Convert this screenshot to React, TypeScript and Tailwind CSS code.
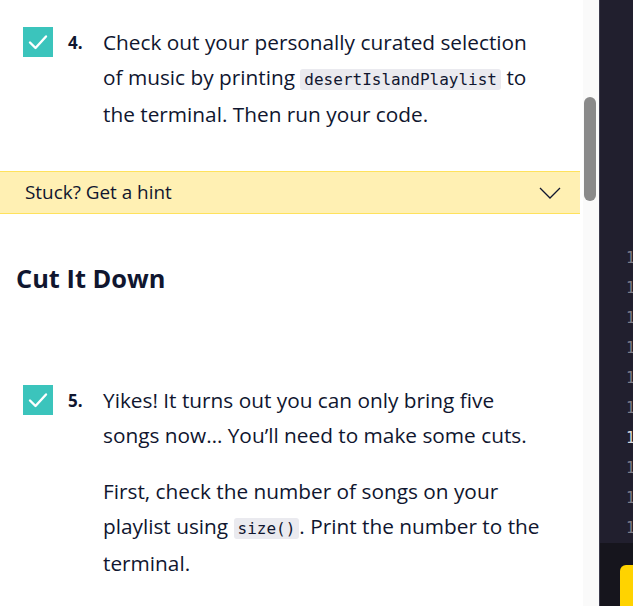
import React from "react";

const Check = () => (
  <div className="w-[30px] h-[30px] bg-[#3bc4bc] flex items-center justify-center shrink-0">
    <svg width="20" height="16" viewBox="0 0 20 16" fill="none">
      <path d="M2 8.5l5.5 5.5L18 2.5" stroke="white" strokeWidth="2.4" strokeLinecap="round" strokeLinejoin="round" />
    </svg>
  </div>
);

const Code = ({ children }: { children: React.ReactNode }) => (
  <code className="bg-[#eaeaef] rounded-[3px] px-[4px] py-[1px] text-[16px] font-['DejaVu_Sans_Mono',monospace] text-[#10162f]">
    {children}
  </code>
);

const Step = ({ n, children }: { n: number; children: React.ReactNode }) => (
  <div className="flex pl-[23px]">
    <div className="mt-[1px] shrink-0">
      <Check />
    </div>
    <div className="w-[50px] shrink-0 pl-[15px] text-[17px] font-bold leading-[35px] -mt-[1px]">{n}.</div>
    <div className="w-[440px] text-[20.8px] leading-[35px] -mt-[1px]">{children}</div>
  </div>
);

export default function App() {
  const lines = [0, 1, 2, 3, 4, 5, 6, 7, 8, 9];
  return (
    <div className="w-[633px] h-[606px] flex overflow-hidden bg-white text-[#10162f] font-['Open_Sans',sans-serif]">
      <div className="w-[583px] shrink-0 pt-[26px]">
        <Step n={4}>
          Check out your personally curated selection of music by printing{" "}
          <Code>desertIslandPlaylist</Code> to the terminal. Then run your code.
        </Step>
        <div className="mt-[39px] w-[580px] h-[43px] bg-[#fff0b3] border-y border-[#ffe25c] flex items-center justify-between pl-[25px] pr-[19px]">
          <span className="text-[18.9px] -mt-[1px]">Stuck? Get a hint</span>
          <svg width="22" height="12" viewBox="0 0 22 12" fill="none">
            <path d="M1 1l10 10L21 1" stroke="#10162f" strokeWidth="1.3" />
          </svg>
        </div>
        <h2 className="mt-[49px] pl-[16px] text-[25.4px] font-bold leading-[30px]">Cut It Down</h2>
        <div className="mt-[91px]">
          <Step n={5}>
            <p>Yikes! It turns out you can only bring five songs now… You’ll need to make some cuts.</p>
            <p className="mt-[21px]">
              First, check the number of songs on your playlist using <Code>size()</Code>. Print the number to the terminal.
            </p>
          </Step>
        </div>
      </div>
      <div className="w-[16px] shrink-0 bg-[#fafafa] relative">
        <div className="absolute left-[1px] top-[97px] w-[12px] h-[104px] rounded-[6px] bg-[#8a8a8a]" />
      </div>
      <div className="flex-1 bg-[#211f2e] border-l border-[#3b3a4c] flex flex-col">
        <div className="flex-1 pt-[243px] pl-[26px] font-['DejaVu_Sans_Mono',monospace] text-[15px] leading-[30px] text-[#7d7c88]">
          {lines.map((i) => (
            <div key={i} className={i === 6 ? "text-[#d8d8de]" : ""}>1</div>
          ))}
        </div>
        <div className="h-[63px] shrink-0 bg-[#16151d] pt-[22px] pl-[20px]">
          <div className="w-[30px] h-[50px] rounded-[6px] bg-[#ffd300]" />
        </div>
      </div>
    </div>
  );
}
